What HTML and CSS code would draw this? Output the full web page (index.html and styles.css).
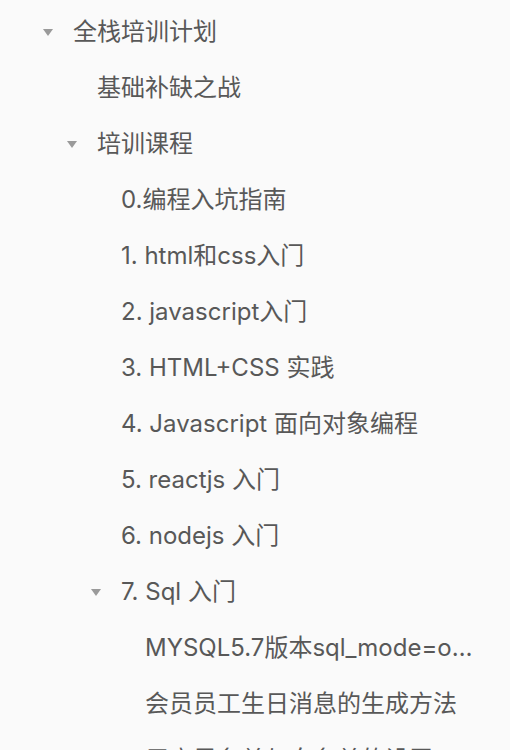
FILE: index.html
```html
<!DOCTYPE html>
<html lang="zh-CN">
<head>
<meta charset="utf-8">
<title>全栈培训计划</title>
<link rel="stylesheet" href="styles.css">
</head>
<body>
<nav class="tree">
  <ul class="level root">
    <li>
      <div class="row"><span class="caret open"></span><span class="label">全栈培训计划</span></div>
      <ul class="level">
        <li><div class="row"><span class="caret none"></span><span class="label">基础补缺之战</span></div></li>
        <li>
          <div class="row"><span class="caret open"></span><span class="label">培训课程</span></div>
          <ul class="level">
            <li><div class="row"><span class="caret none"></span><span class="label">0.编程入坑指南</span></div></li>
            <li><div class="row"><span class="caret none"></span><span class="label">1. html和css入门</span></div></li>
            <li><div class="row"><span class="caret none"></span><span class="label">2. javascript入门</span></div></li>
            <li><div class="row"><span class="caret none"></span><span class="label">3. HTML+CSS 实践</span></div></li>
            <li><div class="row"><span class="caret none"></span><span class="label">4. Javascript 面向对象编程</span></div></li>
            <li><div class="row"><span class="caret none"></span><span class="label">5. reactjs 入门</span></div></li>
            <li><div class="row"><span class="caret none"></span><span class="label">6. nodejs 入门</span></div></li>
            <li>
              <div class="row"><span class="caret open"></span><span class="label">7. Sql 入门</span></div>
              <ul class="level">
                <li><div class="row"><span class="caret none"></span><span class="label">MYSQL5.7版本sql_mode=only_full_group_by问题</span></div></li>
                <li><div class="row"><span class="caret none"></span><span class="label">会员员工生日消息的生成方法</span></div></li>
                <li><div class="row"><span class="caret none"></span><span class="label">用户黑名单与白名单的设置</span></div></li>
              </ul>
            </li>
          </ul>
        </li>
      </ul>
    </li>
  </ul>
</nav>
</body>
</html>
```
FILE: styles.css
```css
html, body {
  margin: 0;
  padding: 0;
  background: #fafafa;
}
body {
  font-family: "Inter", "Noto Sans CJK SC", sans-serif;
  color: #585858;
  font-size: 24px;
  overflow: hidden;
  height: 750px;
}
.tree {
  width: 482px;
  padding-top: 4px;
}
.level {
  list-style: none;
  margin: 0;
  padding: 0 0 0 24px;
}
.level.root {
  padding-left: 41px;
}
.row {
  display: flex;
  align-items: center;
  height: 56px;
  min-width: 0;
}
.caret {
  flex: 0 0 32px;
  height: 56px;
  display: flex;
  align-items: center;
}
.caret.open::before {
  content: "";
  margin-left: 2px;
  width: 0;
  height: 0;
  border-left: 5.5px solid transparent;
  border-right: 5.5px solid transparent;
  border-top: 7px solid #9a9a9a;
}
.label {
  flex: 1 1 auto;
  min-width: 0;
  white-space: nowrap;
  overflow: hidden;
  text-overflow: ellipsis;
  line-height: 56px;
}
```
